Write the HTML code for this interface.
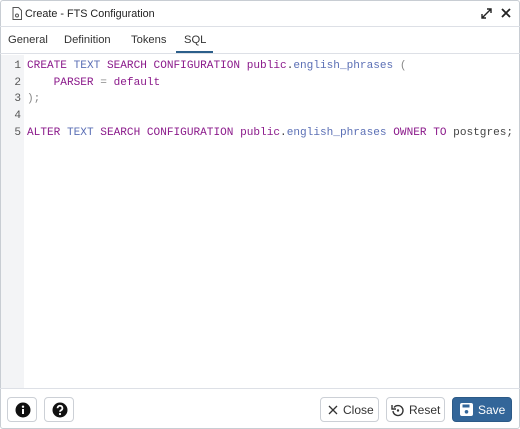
<!DOCTYPE html>
<html><head><style>
*{box-sizing:border-box;margin:0;padding:0}
body{width:520px;height:429px;background:#fff;font-family:"Liberation Sans",sans-serif;position:relative;overflow:hidden}
.frame{position:absolute;inset:0;border:1px solid #c8cdd3;border-radius:3px}
.title{position:absolute;left:0;top:0;width:520px;height:27px;border-bottom:1px solid #dde0e6;font-size:10.8px;color:#222}
.title span{position:absolute;left:25px;top:8px}
.tabs{position:absolute;top:27px;left:0;width:520px;height:27px;border-bottom:1px solid #dde0e6;font-size:11.2px;color:#333}
.tabs span{position:absolute;top:7px}
.ul{position:absolute;left:176px;top:51px;width:37px;height:2px;background:#2c5f8a}
.gutter{position:absolute;left:1px;top:55px;width:23px;height:333px;background:#f3f4f6}
.code{position:absolute;top:58px;font-family:"Liberation Mono",monospace;font-size:11.1px;line-height:16.7px;white-space:pre}
.ln{left:0;width:21px;text-align:right;color:#555}
.src{left:27px;color:#444}
.k{color:#8b1a8b}.b{color:#5b6fb5}.p{color:#888}
.footer{position:absolute;left:0;top:388px;width:520px;height:41px;border-top:1px solid #dde0e6}
.btn{position:absolute;top:8px;height:25px;border:1px solid #ccd0d6;border-radius:4px;background:#fff;font-size:12px;color:#333}
.btn span{position:absolute;top:5px}
</style></head><body>
<div class="frame"></div>
<div class="title">
<svg style="position:absolute;left:12px;top:7px" width="10" height="13" viewBox="0 0 10 13"><path d="M1 .5h5.5l3 3v9H1z" fill="none" stroke="#555"/><circle cx="5" cy="8.5" r="1.5" fill="none" stroke="#555"/></svg>
<span>Create - FTS Configuration</span>
<svg style="position:absolute;left:481px;top:8px" width="11" height="11" viewBox="0 0 11 11"><path d="M1 10L10 1M6 1h4v4M1 6v4h4" fill="none" stroke="#222" stroke-width="1.4"/></svg>
<svg style="position:absolute;left:501px;top:8px" width="10" height="10" viewBox="0 0 10 10"><path d="M1 1l8 8M9 1L1 9" stroke="#222" stroke-width="1.8"/></svg>
</div>
<div class="tabs"><span style="left:8px">General</span><span style="left:64px">Definition</span><span style="left:131px">Tokens</span><span style="left:184px">SQL</span></div>
<div class="ul"></div>
<div class="gutter"></div>
<div class="code ln">1
2
3
4
5</div>
<div class="code src"><span class="k">CREATE</span> <span class="b">TEXT</span> <span class="k">SEARCH CONFIGURATION public</span>.<span class="b">english_phrases</span> <span class="p">(</span>
    <span class="k">PARSER</span> <span class="p">=</span> <span class="k">default</span>
<span class="p">);</span>

<span class="k">ALTER</span> <span class="b">TEXT</span> <span class="k">SEARCH CONFIGURATION public</span>.<span class="b">english_phrases</span> <span class="k">OWNER TO</span> postgres;</div>
<div class="footer">
<div class="btn" style="left:7px;width:30px"><svg style="position:absolute;left:7px;top:4px" width="16" height="16" viewBox="0 0 16 16"><circle cx="8" cy="8" r="7.5" fill="#111"/><rect x="7" y="7" width="2" height="5" fill="#fff"/><circle cx="8" cy="4.7" r="1.2" fill="#fff"/></svg></div>
<div class="btn" style="left:44px;width:30px"><svg style="position:absolute;left:7px;top:4px" width="16" height="16" viewBox="0 0 16 16"><circle cx="8" cy="8" r="7.5" fill="#111"/><path d="M5.6 6.2a2.4 2.4 0 1 1 3.4 2.1c-.7.4-1 .8-1 1.5" fill="none" stroke="#fff" stroke-width="1.8"/><circle cx="8" cy="12" r="1.1" fill="#fff"/></svg></div>
<div class="btn" style="left:320px;width:59px"><svg style="position:absolute;left:7px;top:7px" width="10" height="10" viewBox="0 0 10 10"><path d="M1 1l8 8M9 1L1 9" stroke="#333" stroke-width="1.3"/></svg><span style="left:22px">Close</span></div>
<div class="btn" style="left:386px;width:59px"><svg style="position:absolute;left:4px;top:5px" width="14" height="14" viewBox="0 0 14 14"><path d="M3 4.5A5 5 0 1 1 2 8" fill="none" stroke="#333" stroke-width="1.4"/><path d="M1 2v4h4" fill="none" stroke="#333" stroke-width="1.4"/><circle cx="7" cy="7.5" r="1.2" fill="#333"/></svg><span style="left:22px">Reset</span></div>
<div class="btn" style="left:452px;width:60px;background:#336699;border-color:#2c5a87;color:#fff"><svg style="position:absolute;left:7px;top:5px" width="13" height="13" viewBox="0 0 13 13"><rect x="0" y="0" width="13" height="13" rx="2" fill="#fff"/><rect x="2.5" y="1.5" width="7" height="3" fill="#336699"/><circle cx="6.5" cy="8.8" r="1.8" fill="#336699"/></svg><span style="left:25px">Save</span></div>
</div>
</body></html>
